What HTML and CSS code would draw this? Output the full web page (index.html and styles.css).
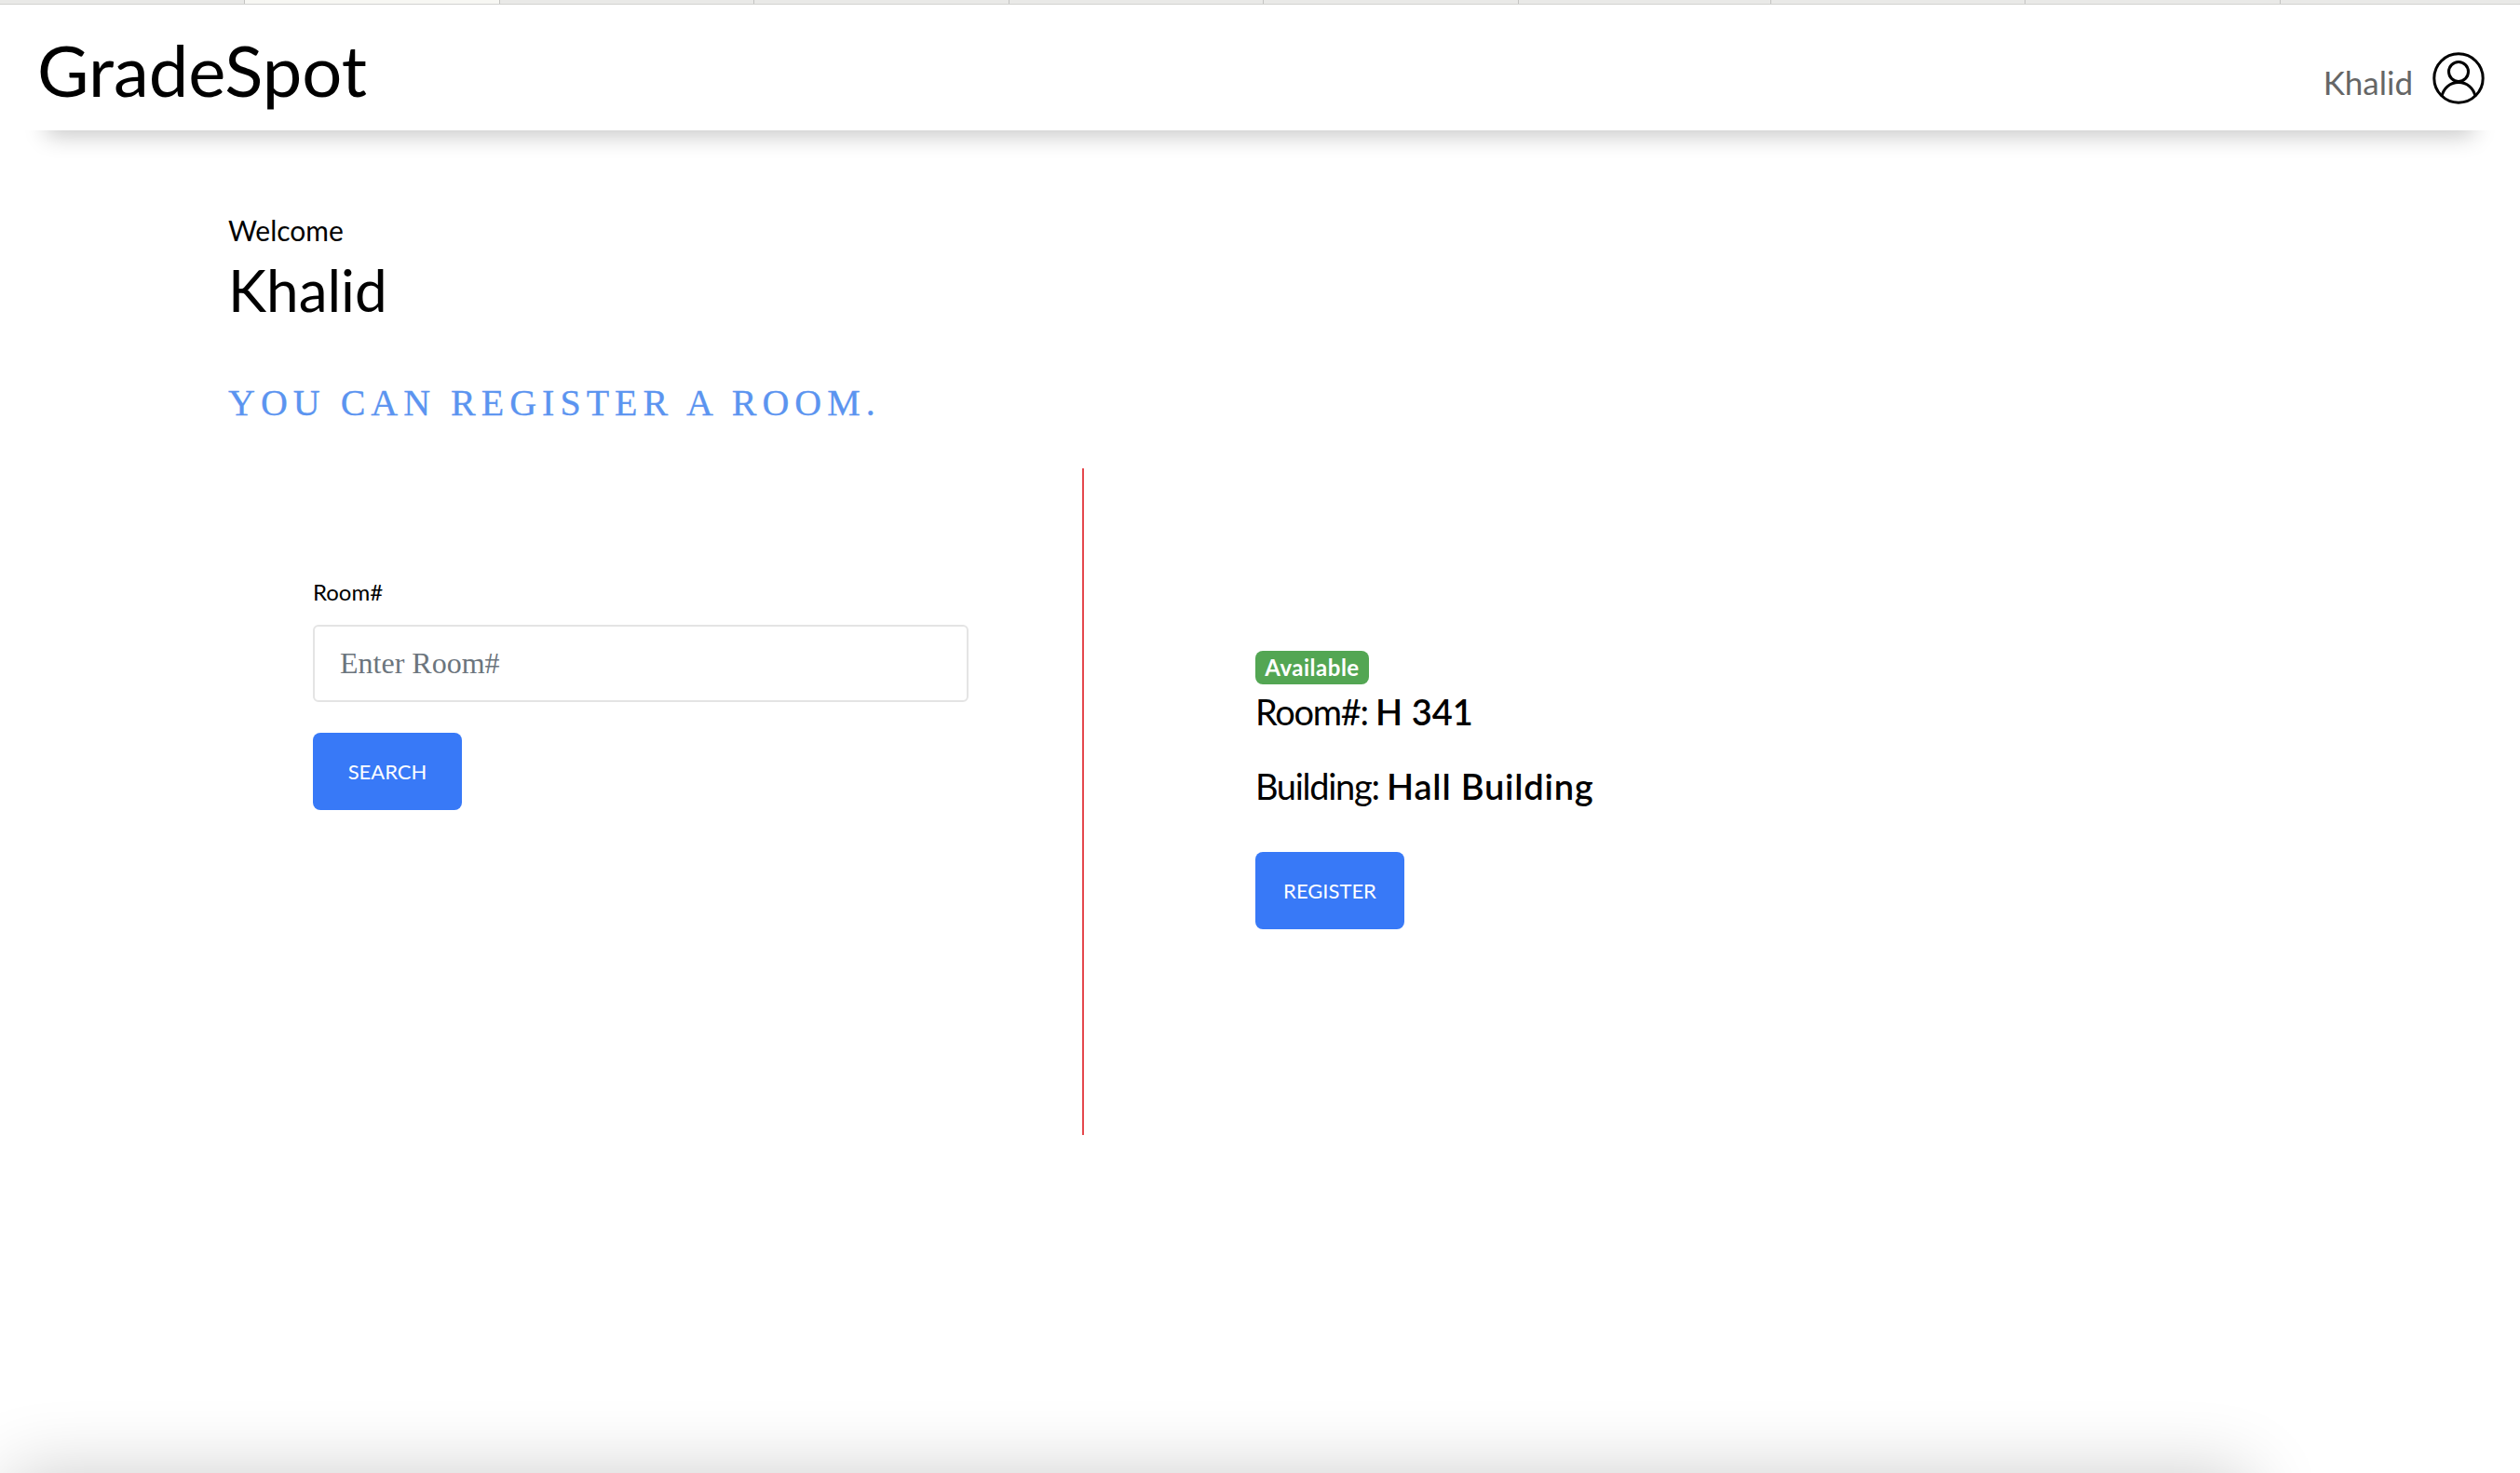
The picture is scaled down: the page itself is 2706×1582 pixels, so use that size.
FILE: index.html
```html
<!DOCTYPE html>
<html lang="en">
<head>
<meta charset="UTF-8">
<meta name="viewport" content="width=device-width, initial-scale=1.0">
<title>GradeSpot</title>
<link rel="stylesheet" href="styles.css">
</head>
<body>
<div class="page">
    <div class="tabs">
        <div class="tab"></div>
        <div class="tab tab-active"></div>
        <div class="tab"></div>
        <div class="tab"></div>
        <div class="tab"></div>
        <div class="tab"></div>
        <div class="tab"></div>
        <div class="tab"></div>
        <div class="tab"></div>
        <div class="tab"></div>
    </div>

    <nav class="navbar">
        <div class="brand">GradeSpot</div>
        <div class="user">
            <span class="user-name">Khalid</span>
            <svg class="user-icon" viewBox="0 0 56 56" fill="none" stroke="#000" stroke-width="3">
                <circle cx="28" cy="28" r="26.2"/>
                <circle cx="28" cy="21" r="10.5"/>
                <path d="M10 47.5C12 38.5 19 32.5 28 32.5C37 32.5 44 38.5 46 47.5"/>
            </svg>
        </div>
    </nav>

    <main class="content">
        <p class="welcome">Welcome</p>
        <h1 class="student">Khalid</h1>
        <h2 class="notice">YOU CAN REGISTER A ROOM.</h2>

        <div class="columns">
            <section class="search-col">
                <label class="field-label" for="roomInput">Room#</label>
                <input type="text" id="roomInput" class="field" placeholder="Enter Room#">
                <button class="btn">SEARCH</button>
            </section>
            <section class="result-col">
                <span class="badge">Available</span>
                <p class="info info-room">Room#: <b>H 341</b></p>
                <p class="info info-building">Building: <b>Hall Building</b></p>
                <button class="btn">REGISTER</button>
            </section>
        </div>
    </main>

    <div class="footer-shade"></div>
</div>
</body>
</html>
```

FILE: styles.css
```css
* {
    box-sizing: border-box;
}

body {
    margin: 0;
    background-color: #fff;
    color: #000;
    font-family: "Lato", "Noto Sans", sans-serif;
}

.page {
    display: flex;
    flex-direction: column;
    height: 1582px;
    overflow: hidden;
}

.tabs {
    display: flex;
    height: 5px;
    flex-shrink: 0;
    background-color: #e9e9e7;
    border-bottom: 1px solid #d2d2d0;
}

.tab {
    width: 273.5px;
    border-right: 1px solid #c4c4c2;
}

.tab:first-child {
    width: 263px;
}

.tab:nth-child(7) {
    width: 271px;
}

.tab:last-child {
    flex: 1;
    border-right: none;
}

.tab-active {
    background-color: #f7f7f3;
}

.navbar {
    display: flex;
    justify-content: space-between;
    height: 135px;
    flex-shrink: 0;
    padding: 0 38px 0 40px;
    background-color: #fff;
    box-shadow: 0 56px 24px -50px rgba(0,0,0,0.22);
}

.brand {
    margin-top: 24px;
    font-size: 76px;
    line-height: 92px;
}

.user {
    display: flex;
    align-items: flex-start;
    gap: 21px;
    padding-top: 51px;
}

.user-name {
    margin-top: 9px;
    font-size: 35px;
    line-height: 46px;
    color: #666;
}

.user-icon {
    width: 56px;
    height: 56px;
}

.content {
    padding: 88px 0 0 245px;
}

.welcome {
    margin: 0;
    font-size: 30px;
    line-height: 38px;
}

.student {
    margin: 7px 0 0;
    font-size: 62px;
    line-height: 76px;
    font-weight: 400;
}

.notice {
    margin: 61px 0 0;
    font-family: "Liberation Serif", serif;
    font-size: 40px;
    line-height: 46px;
    font-weight: 400;
    letter-spacing: 6px;
    color: #5b94f0;
    -webkit-text-stroke: 0.3px #5b94f0;
}

.columns {
    display: flex;
    margin-top: 47px;
    height: 716px;
}

.search-col {
    display: flex;
    flex-direction: column;
    align-items: flex-start;
    width: 919px;
    padding: 118px 0 0 91px;
    border-right: 2px solid #e5484d;
}

.field-label {
    font-size: 24px;
    line-height: 30px;
}

.field {
    width: 704px;
    height: 83px;
    margin-top: 20px;
    padding: 0 27px;
    border: 2px solid #e4e4e4;
    border-radius: 6px;
    outline: none;
    font-family: "Liberation Serif", serif;
    font-size: 32px;
}

.field::placeholder {
    color: #6c757d;
}

.btn {
    width: 160px;
    height: 83px;
    padding: 0;
    border: none;
    border-radius: 8px;
    background-color: #3879f7;
    color: #fff;
    font-family: "Lato", "Noto Sans", sans-serif;
    font-size: 22px;
}

.search-col .btn {
    margin-top: 33px;
}

.result-col {
    display: flex;
    flex-direction: column;
    align-items: flex-start;
    padding: 196px 0 0 184px;
}

.badge {
    height: 36px;
    width: 122px;
    border-radius: 8px;
    background-color: #53a653;
    color: #fff;
    font-size: 24px;
    font-weight: 700;
    letter-spacing: 0.5px;
    line-height: 36px;
    text-align: center;
}

.info {
    margin: 0;
    font-size: 38px;
    line-height: 46px;
    letter-spacing: -1.3px;
}

.info b {
    font-weight: 600;
    letter-spacing: 0.8px;
}

.info-room {
    margin-top: 6px;
}

.info-room b {
    letter-spacing: 0;
}

.info-building {
    margin-top: 34px;
}

.result-col .btn {
    margin-top: 48px;
}

.footer-shade {
    width: 2405px;
    height: 120px;
    margin: auto 0 -120px 10px;
    flex-shrink: 0;
    box-shadow: 0 0 80px rgba(0,0,0,0.2);
}
```
